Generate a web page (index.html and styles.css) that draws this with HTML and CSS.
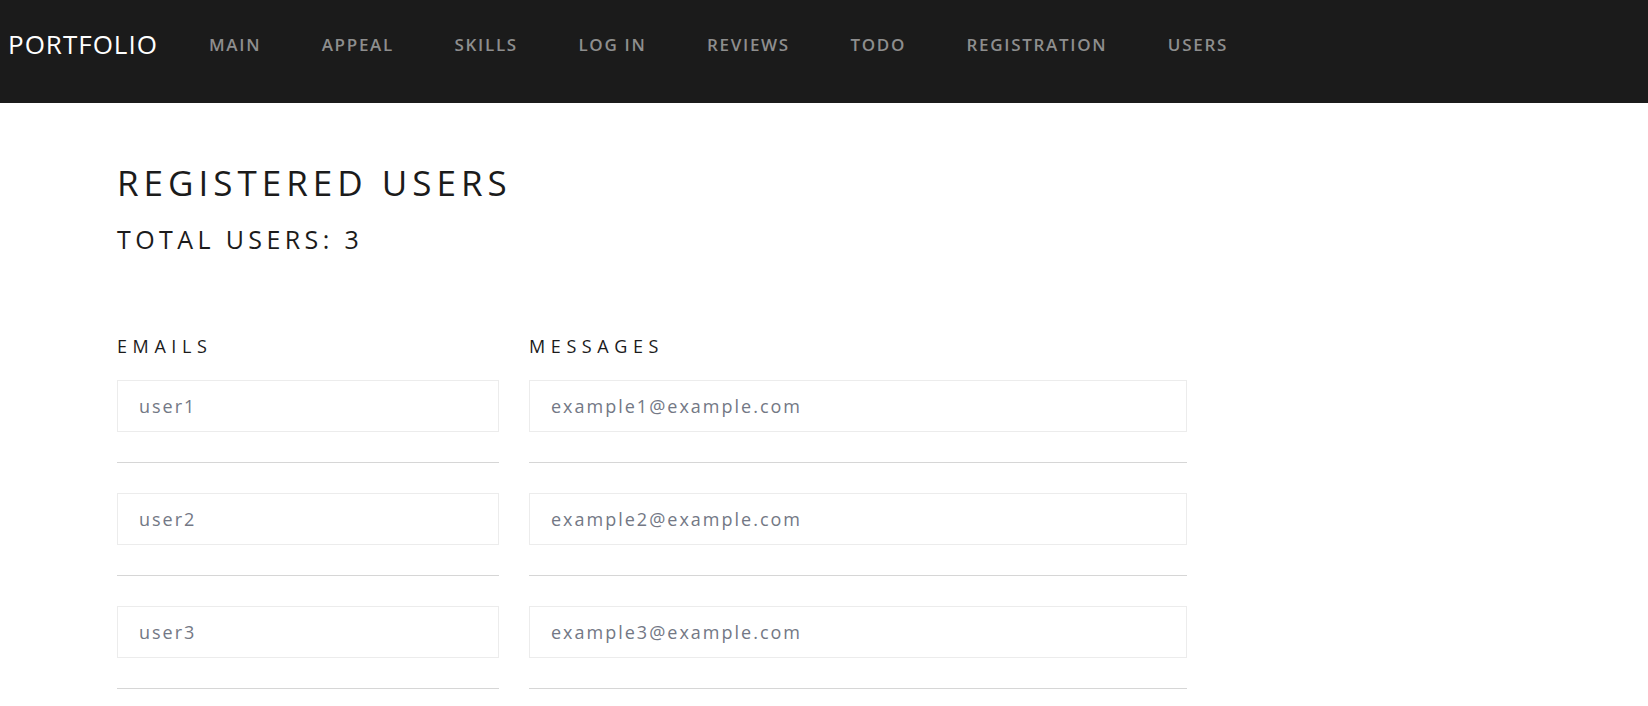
FILE: index.html
```html
<!DOCTYPE html>
<html lang="en">
<head>
<meta charset="utf-8">
<title>Users</title>
<link rel="stylesheet" href="styles.css">
</head>
<body>
<header class="navbar">
  <a class="brand" href="#">PORTFOLIO</a>
  <nav class="nav">
    <a href="#">MAIN</a>
    <a href="#">APPEAL</a>
    <a href="#">SKILLS</a>
    <a href="#">LOG IN</a>
    <a href="#">REVIEWS</a>
    <a href="#">TODO</a>
    <a href="#">REGISTRATION</a>
    <a href="#">USERS</a>
  </nav>
</header>
<main class="content">
  <h1 class="title">REGISTERED USERS</h1>
  <h2 class="subtitle">TOTAL USERS: 3</h2>
  <div class="table">
    <div class="col-head">EMAILS</div>
    <div class="col-head">MESSAGES</div>

    <div class="cell"><div class="field">user1</div><hr class="sep"></div>
    <div class="cell"><div class="field">example1@example.com</div><hr class="sep"></div>

    <div class="cell"><div class="field">user2</div><hr class="sep"></div>
    <div class="cell"><div class="field">example2@example.com</div><hr class="sep"></div>

    <div class="cell"><div class="field">user3</div><hr class="sep"></div>
    <div class="cell"><div class="field">example3@example.com</div><hr class="sep"></div>
  </div>
</main>
</body>
</html>
```
FILE: styles.css
```css
* { box-sizing: border-box; }
html, body { margin: 0; padding: 0; }
body {
  font-family: "Open Sans", "Noto Sans", Arial, sans-serif;
  background: #ffffff;
  color: #1b1b1b;
  overflow: hidden;
}
a { text-decoration: none; }

.navbar {
  height: 103px;
  background: #1b1b1b;
  display: flex;
  align-items: center;
  padding: 0 8px 13px 8px;
}
.brand {
  color: #ffffff;
  font-size: 26px;
  line-height: 1.2;
  font-weight: 400;
  letter-spacing: 1px;
}
.nav {
  display: flex;
  gap: 60.5px;
  margin-left: 51px;
}
.nav a {
  color: #8e8e8e;
  font-size: 17px;
  font-weight: 600;
  line-height: 1.2;
  letter-spacing: 1.7px;
}

.content {
  padding-left: 117px;
}
.title {
  margin: 59px 0 0 0;
  font-size: 35px;
  line-height: 42px;
  font-weight: 400;
  letter-spacing: 5px;
}
.subtitle {
  margin: 20px 0 0 0;
  font-size: 25px;
  line-height: 30px;
  font-weight: 400;
  letter-spacing: 4.4px;
}
.table {
  display: grid;
  grid-template-columns: 382px 658px;
  column-gap: 30px;
  margin-top: 82px;
}
.col-head {
  font-size: 18px;
  line-height: 21.6px;
  letter-spacing: 5.6px;
  margin-bottom: 22px;
}
.field {
  height: 52px;
  border: 1px solid #ececec;
  padding: 0 20px 0 21px;
  font-size: 18px;
  line-height: 50px;
  color: #737885;
  font-weight: 400;
  letter-spacing: 2px;
}
.sep {
  margin: 30px 0 30px 0;
  border: 0;
  border-top: 1px solid #d6d6d6;
  height: 0;
}
```
